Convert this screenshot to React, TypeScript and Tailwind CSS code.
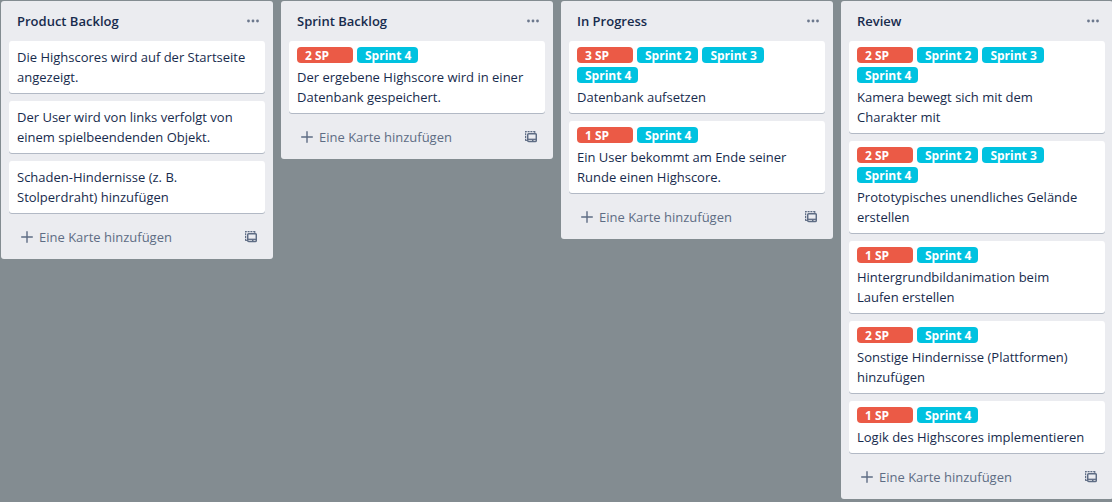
type Card = { labels?: string[]; title: string };
type List = { name: string; cards: Card[] };

const lists: List[] = [
  {
    name: 'Product Backlog',
    cards: [
      { title: 'Die Highscores wird auf der Startseite angezeigt.' },
      { title: 'Der User wird von links verfolgt von einem spielbeendenden Objekt.' },
      { title: 'Schaden-Hindernisse (z. B. Stolperdraht) hinzufügen' },
    ],
  },
  {
    name: 'Sprint Backlog',
    cards: [
      {
        labels: ['2 SP', 'Sprint 4'],
        title: 'Der ergebene Highscore wird in einer Datenbank gespeichert.',
      },
    ],
  },
  {
    name: 'In Progress',
    cards: [
      { labels: ['3 SP', 'Sprint 2', 'Sprint 3', 'Sprint 4'], title: 'Datenbank aufsetzen' },
      {
        labels: ['1 SP', 'Sprint 4'],
        title: 'Ein User bekommt am Ende seiner Runde einen Highscore.',
      },
    ],
  },
  {
    name: 'Review',
    cards: [
      {
        labels: ['2 SP', 'Sprint 2', 'Sprint 3', 'Sprint 4'],
        title: 'Kamera bewegt sich mit dem Charakter mit',
      },
      {
        labels: ['2 SP', 'Sprint 2', 'Sprint 3', 'Sprint 4'],
        title: 'Prototypisches unendliches Gelände erstellen',
      },
      { labels: ['1 SP', 'Sprint 4'], title: 'Hintergrundbildanimation beim Laufen erstellen' },
      { labels: ['2 SP', 'Sprint 4'], title: 'Sonstige Hindernisse (Plattformen) hinzufügen' },
      { labels: ['1 SP', 'Sprint 4'], title: 'Logik des Highscores implementieren' },
    ],
  },
];

function DotsIcon() {
  return (
    <svg width="12" height="4" viewBox="0 0 12 4" fill="currentColor" aria-hidden="true">
      <circle cx="1.5" cy="2" r="1.4" />
      <circle cx="6" cy="2" r="1.4" />
      <circle cx="10.5" cy="2" r="1.4" />
    </svg>
  );
}

function PlusIcon() {
  return (
    <svg width="12" height="12" viewBox="0 0 12 12" stroke="currentColor" strokeWidth="1.4" strokeLinecap="round" aria-hidden="true">
      <path d="M6 .7v10.6M.7 6h10.6" />
    </svg>
  );
}

function TemplateIcon() {
  return (
    <svg width="12" height="12" viewBox="0 0 12 12" fill="none" stroke="currentColor" aria-hidden="true">
      <path d="M.6 9.8V.6h9.6" strokeWidth="1.2" strokeDasharray="2 .8" />
      <path d="M.4 9.4h1.8M9.8.4v1.8" />
      <rect x="2.7" y="2.7" width="8.6" height="7.8" rx="1" strokeWidth="1.5" />
      <path d="M3 8.3h8" strokeWidth="1.3" />
      <path d="M7 9.4h1.5" strokeWidth="1.2" />
    </svg>
  );
}

function Label({ text }: { text: string }) {
  const color = text.endsWith('SP') ? 'bg-[#eb5a46]' : 'bg-[#00c2e0]';
  return (
    <span className={`h-4 min-w-14 overflow-hidden rounded pt-px pr-[7px] pl-2 text-xs leading-4 font-bold text-white ${color}`}>
      {text}
    </span>
  );
}

function CardView({ card }: { card: Card }) {
  return (
    <li className="flex flex-col gap-1 rounded-[3px] bg-white px-2 py-1.5 shadow-[0_1px_0_#091e4240]">
      {card.labels && (
        <div className="flex flex-wrap gap-1">
          {card.labels.map((label) => (
            <Label key={label} text={label} />
          ))}
        </div>
      )}
      <p className="pr-2 text-[13px] leading-5 text-[#172b4d]">{card.title}</p>
    </li>
  );
}

function ListView({ list }: { list: List }) {
  return (
    <section className="w-[272px] shrink-0 rounded-[3px] bg-[#ebecf0] px-2 pb-2">
      <header className="flex h-10 items-center justify-between pl-2">
        <h2 className="text-[13px] leading-5 font-semibold text-[#172b4d]">{list.name}</h2>
        <button type="button" aria-label="Listenmenü" className="flex h-8 w-6 items-center justify-center text-[#6b778c]">
          <DotsIcon />
        </button>
      </header>
      <ul className="flex flex-col gap-2">
        {list.cards.map((card) => (
          <CardView key={card.title} card={card} />
        ))}
      </ul>
      <footer className="mt-2.5 flex h-7 items-center justify-between pr-2 pl-3">
        <button type="button" className="flex items-center gap-1.5 text-[13px] leading-5 text-[#5e6c84]">
          <PlusIcon />
          Eine Karte hinzufügen
        </button>
        <button type="button" aria-label="Aus Vorlage erstellen" className="text-[#5e6c84]">
          <TemplateIcon />
        </button>
      </footer>
    </section>
  );
}

export default function App() {
  return (
    <main className="flex min-h-screen items-start gap-2 overflow-hidden bg-[#838c91] pt-px pl-px font-['Open_Sans','Noto_Sans',sans-serif]">
      {lists.map((list) => (
        <ListView key={list.name} list={list} />
      ))}
    </main>
  );
}
